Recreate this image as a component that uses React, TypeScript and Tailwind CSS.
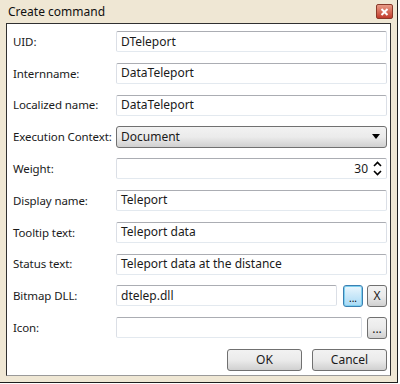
import React from "react";

const font = { fontFamily: '"Noto Sans", "Segoe UI", sans-serif' };

const boxBase =
  "h-[21px] rounded-[2px] border border-t-[#abadb3] border-l-[#dbdfe6] border-r-[#dbdfe6] border-b-[#e3e9ef] bg-white flex items-center px-[4px] text-[12px] text-[#1a1a1a]";

const btnFace =
  "rounded-[3px] border border-[#707070] bg-gradient-to-b from-[#f2f2f2] via-[#ebebeb] to-[#d0d0d0] flex items-center text-[12px] text-[#1a1a1a]";

const btnBase = `${btnFace} justify-center`;

const Label = ({ children }: { children: React.ReactNode }) => (
  <div className="w-[103px] shrink-0 whitespace-nowrap text-[11.5px] tracking-[-0.1px] text-[#1a1a1a] leading-none">
    {children}
  </div>
);

const TextRow = ({ label, value }: { label: string; value?: string }) => (
  <div className="flex items-center h-[21px]">
    <Label>{label}</Label>
    <div className={`${boxBase} flex-1`}>{value}</div>
  </div>
);

export default function App() {
  return (
    <div className="w-[400px] h-[384px] bg-white" style={font}>
      <div className="w-[398px] h-[383px] bg-[#efe7d4] border-r border-b border-[#1e1e1e] flex flex-col">
        {/* title bar */}
        <div className="h-[23px] flex items-center justify-between pl-[8px] pr-[4px]">
          <span className="text-[12px] text-[#101010]">Create command</span>
          <div className="w-[17px] h-[15px] rounded-[2px] border border-[#8a3a2a] bg-gradient-to-b from-[#e89a86] to-[#c0392b] flex items-center justify-center">
            <svg width="9" height="8" viewBox="0 0 9 8">
              <path d="M1.5 1 L7.5 7 M7.5 1 L1.5 7" stroke="#fff" strokeWidth="2" />
            </svg>
          </div>
        </div>

        {/* client area */}
        <div className="ml-[6px] w-[385px] h-[353px] bg-white border border-t-[#303030] border-l-[#303030] border-r-[#303030] border-b-[#9a9a9a] pt-[7px] pl-[6px] pr-[3px] flex flex-col gap-[10.8px]">
          <TextRow label="UID:" value="DTeleport" />
          <TextRow label="Internname:" value="DataTeleport" />
          <TextRow label="Localized name:" value="DataTeleport" />

          <div className="flex items-center h-[21px]">
            <Label>Execution Context:</Label>
            <div className={`${btnFace} flex-1 h-[22px] justify-between pl-[4px] pr-[6px]`}>
              <span>Document</span>
              <svg width="8" height="5" viewBox="0 0 8 5">
                <path d="M0 0 H8 L4 5 Z" fill="#000" />
              </svg>
            </div>
          </div>

          <div className="flex items-center h-[21px]">
            <Label>Weight:</Label>
            <div className={`${boxBase} flex-1 justify-end pr-[4px]`}>
              <span className="mr-[5px]">30</span>
              <svg width="9" height="15" viewBox="0 0 9 15">
                <path d="M1 5 L4.5 1.5 L8 5" stroke="#000" strokeWidth="1.6" fill="none" />
                <path d="M1 10 L4.5 13.5 L8 10" stroke="#000" strokeWidth="1.6" fill="none" />
              </svg>
            </div>
          </div>

          <TextRow label="Display name:" value="Teleport" />
          <TextRow label="Tooltip text:" value="Teleport data" />
          <TextRow label="Status text:" value="Teleport data at the distance" />

          <div className="flex items-center h-[21px]">
            <Label>Bitmap DLL:</Label>
            <div className={`${boxBase} w-[221px]`}>dtelep.dll</div>
            <div className="ml-[6px] w-[20px] h-[22px] rounded-[3px] border border-[#3c7fb1] bg-gradient-to-b from-[#eaf6fd] to-[#a7d9f5] shadow-[inset_0_0_0_1px_#7dd0f0] flex items-end justify-center pb-[3px] text-[10px] leading-none">
              ...
            </div>
            <div className={`${btnBase} ml-[4px] w-[20px] h-[22px]`}>X</div>
          </div>

          <div className="flex items-center h-[21px]">
            <Label>Icon:</Label>
            <div className={`${boxBase} w-[246px]`} />
            <div className={`${btnBase} ml-[5px] w-[20px] h-[22px] items-end pb-[3px] text-[10px] leading-none`}>
              ...
            </div>
          </div>

          <div className="flex justify-end gap-[10px] h-[22px]">
            <div className={`${btnBase} w-[75px] h-[22px]`}>OK</div>
            <div className={`${btnBase} w-[75px] h-[22px]`}>Cancel</div>
          </div>
        </div>
      </div>
    </div>
  );
}
